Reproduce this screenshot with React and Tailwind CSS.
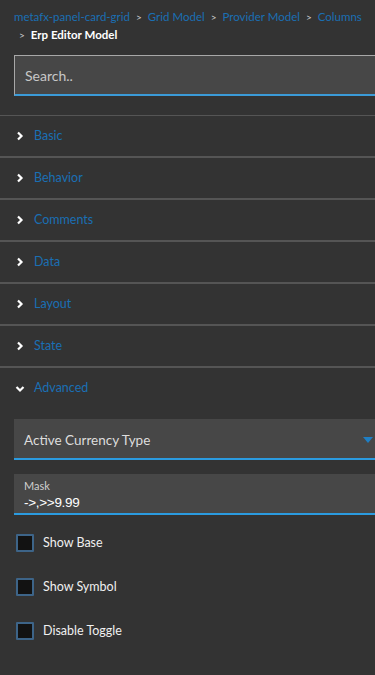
import React from 'react';

const sections = ['Basic', 'Behavior', 'Comments', 'Data', 'Layout', 'State'];

const Chevron = () => (
    <svg width="8" height="10" viewBox="0 0 8 10" className="shrink-0">
        <path d="M2 1.5 L5.5 5 L2 8.5" fill="none" stroke="#fff" strokeWidth="2.2" />
    </svg>
);

const ChevronDown = () => (
    <svg width="10" height="8" viewBox="0 0 10 8" className="shrink-0">
        <path d="M1.5 2 L5 5.5 L8.5 2" fill="none" stroke="#fff" strokeWidth="2.2" />
    </svg>
);

const Sep = () => <span className="text-[#cfcfcf] mx-[6px] text-[10px]">&gt;</span>;

const Checkbox = ({ label }) => (
    <label className="flex items-center gap-[9px] h-[44px] pl-4">
        <span className="w-[18px] h-[18px] border-2 border-[#3d6488] bg-[#121212] rounded-[1px]" />
        <span className="text-[12.5px] text-[#f0f0f0]">{label}</span>
    </label>
);

export default function App() {
    return (
        <div className="w-[375px] h-[675px] bg-[#333333] overflow-hidden font-['Lato',sans-serif]">
            <div className="pl-[14px] pt-[8px] text-[11.5px] leading-[18px]">
                <div className="flex items-center whitespace-nowrap">
                    <span className="text-[#1a6fb3]">metafx-panel-card-grid</span>
                    <Sep />
                    <span className="text-[#1a6fb3]">Grid Model</span>
                    <Sep />
                    <span className="text-[#1a6fb3]">Provider Model</span>
                    <Sep />
                    <span className="text-[#1a6fb3]">Columns</span>
                </div>
                <div className="flex items-center pl-[5px]">
                    <span className="text-[#cfcfcf] mr-[6px] text-[10px]">&gt;</span>
                    <span className="text-white font-bold">Erp Editor Model</span>
                </div>
            </div>

            <div className="ml-[14px] mt-[11px] w-[375px] h-[41px] bg-[#474747] border border-[#a8a8a8] border-b-2 border-b-[#3b9bd8] flex items-center pl-[10px]">
                <span className="text-[14px] text-[#c8c8c8]">Search..</span>
            </div>

            <div className="mt-[19px] border-t border-[#555]">
                {sections.map((s) => (
                    <div key={s} className="h-[42px] border-b-2 border-[#555] flex items-center gap-[10px] pl-[16px]">
                        <Chevron />
                        <span className="text-[12.5px] text-[#1a6fb3]">{s}</span>
                    </div>
                ))}
                <div className="h-[41px] flex items-center gap-[9px] pl-[15px]">
                    <ChevronDown />
                    <span className="text-[12.5px] text-[#1a6fb3]">Advanced</span>
                </div>
            </div>

            <div className="pl-[14px] pt-[10px]">
                <div className="w-[361px] h-[41px] bg-[#474747] border-b-2 border-[#2b9be0] flex items-center justify-between pt-[3px] pl-[10px] pr-[2px]">
                    <span className="text-[13.5px] text-[#dddddd]">Active Currency Type</span>
                    <svg width="10" height="6" viewBox="0 0 10 6">
                        <path d="M0 0 L10 0 L5 6 Z" fill="#1f7fc4" />
                    </svg>
                </div>
                <div className="mt-[14px] w-[361px] h-[41px] bg-[#474747] border-b-2 border-[#2b9be0] flex flex-col pt-[5px] pl-[10px]">
                    <span className="text-[11px] leading-[13px] text-[#cfcfcf]">Mask</span>
                    <span className="mt-[3px] text-[13.5px] leading-[16px] text-white font-['Liberation_Sans',sans-serif] tracking-[-0.3px]">-&gt;,&gt;&gt;9.99</span>
                </div>
            </div>

            <div className="mt-[6px]">
                <Checkbox label="Show Base" />
                <Checkbox label="Show Symbol" />
                <Checkbox label="Disable Toggle" />
            </div>
        </div>
    );
}
